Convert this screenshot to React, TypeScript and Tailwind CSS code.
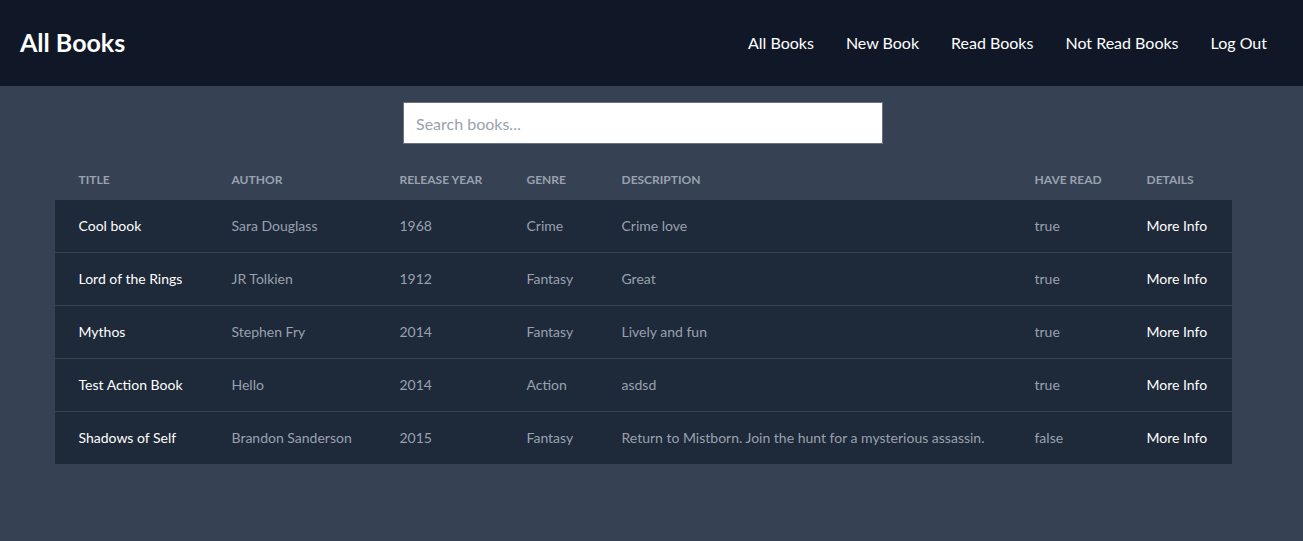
const books = [
  { title: "Cool book", author: "Sara Douglass", year: 1968, genre: "Crime", description: "Crime love", read: true },
  { title: "Lord of the Rings", author: "JR Tolkien", year: 1912, genre: "Fantasy", description: "Great", read: true },
  { title: "Mythos", author: "Stephen Fry", year: 2014, genre: "Fantasy", description: "Lively and fun", read: true },
  { title: "Test Action Book", author: "Hello", year: 2014, genre: "Action", description: "asdsd", read: true },
  {
    title: "Shadows of Self",
    author: "Brandon Sanderson",
    year: 2015,
    genre: "Fantasy",
    description: "Return to Mistborn. Join the hunt for a mysterious assassin.",
    read: false,
  },
];

const navLinks = ["All Books", "New Book", "Read Books", "Not Read Books", "Log Out"];

function Navbar() {
  return (
    <nav className="flex h-[86px] items-center justify-between bg-gray-900 px-5">
      <h1 className="text-[25px] font-bold text-white">All Books</h1>
      <ul className="flex">
        {navLinks.map((link) => (
          <li key={link}>
            <a href="#" className="px-4 text-base text-white">
              {link}
            </a>
          </li>
        ))}
      </ul>
    </nav>
  );
}

export default function App() {
  return (
    <div className="min-h-[541px] bg-gray-700 font-['Lato',sans-serif]">
      <Navbar />

      <main className="pr-[17px]">
        <div className="flex justify-center pt-4">
          <input
            type="text"
            placeholder="Search books..."
            className="h-[42px] w-[480px] border border-gray-500 bg-white px-3 text-base text-gray-900 placeholder-gray-400 outline-none"
          />
        </div>

        {/* table of books */}
        <div className="mt-4 flex justify-center">
          <table className="w-[1177px] table-fixed text-left text-sm">
            <thead>
              <tr className="whitespace-nowrap text-xs font-bold uppercase text-gray-400">
                <th className="w-[153px] px-6 py-3 font-bold">Title</th>
                <th className="w-[168px] px-6 py-3 font-bold">Author</th>
                <th className="w-[127px] px-6 py-3 font-bold">Release Year</th>
                <th className="w-[95px] px-6 py-3 font-bold">Genre</th>
                <th className="w-[413px] px-6 py-3 font-bold">Description</th>
                <th className="w-[112px] px-6 py-3 font-bold">Have Read</th>
                <th className="w-[109px] px-6 py-3 font-bold">Details</th>
              </tr>
            </thead>
            <tbody className="divide-y divide-gray-700 bg-gray-800">
              {books.map((book) => (
                <tr key={book.title}>
                  <td className="whitespace-nowrap px-6 py-4 text-white">{book.title}</td>
                  <td className="whitespace-nowrap px-6 py-4 text-gray-400">{book.author}</td>
                  <td className="whitespace-nowrap px-6 py-4 text-gray-400">{book.year}</td>
                  <td className="whitespace-nowrap px-6 py-4 text-gray-400">{book.genre}</td>
                  <td className="whitespace-nowrap px-6 py-4 text-gray-400">{book.description}</td>
                  <td className="whitespace-nowrap px-6 py-4 text-gray-400">{String(book.read)}</td>
                  <td className="whitespace-nowrap px-6 py-4 text-white">
                    <a href="#">More Info</a>
                  </td>
                </tr>
              ))}
            </tbody>
          </table>
        </div>
      </main>
    </div>
  );
}
